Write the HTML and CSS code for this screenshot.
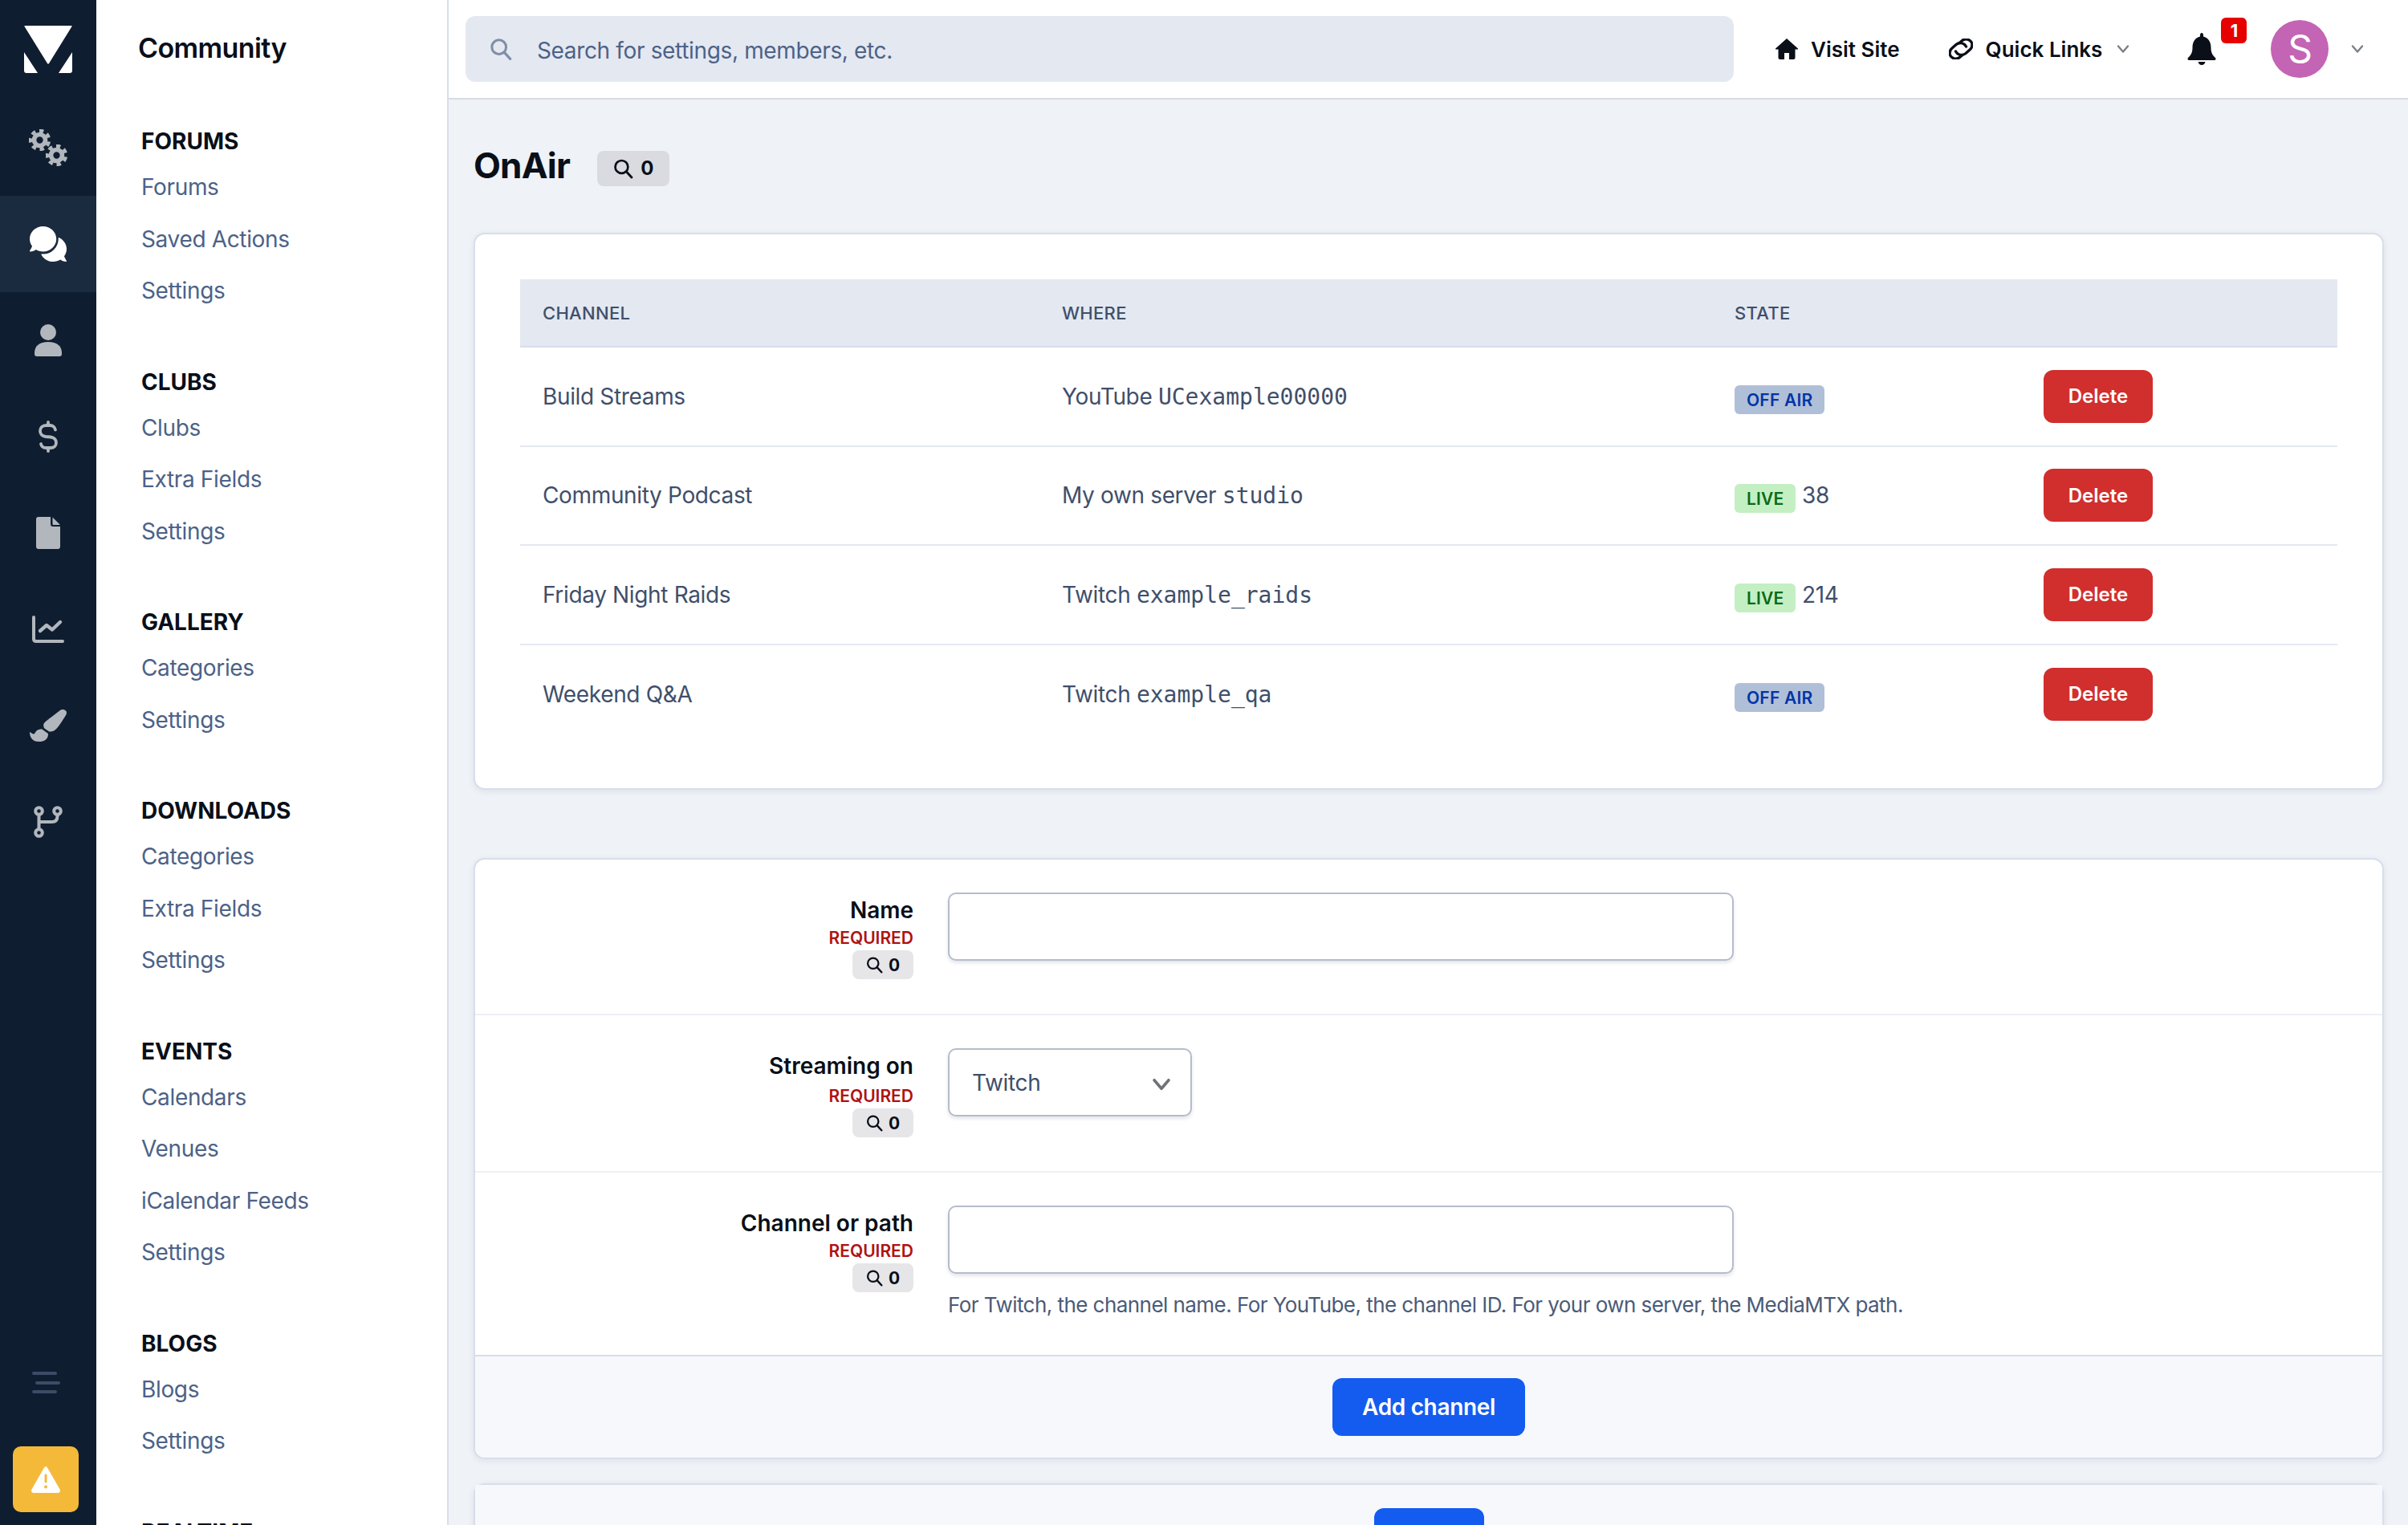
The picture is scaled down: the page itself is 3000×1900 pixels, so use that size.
FILE: index.html
```html
<!DOCTYPE html>
<html lang="en">
<head>
  <meta charset="UTF-8">
  <title>OnAir</title>
  <link rel="stylesheet" href="styles.css">
</head>
<body>
  <svg class="sprite" width="0" height="0">
    <symbol id="search" viewBox="0 0 24 24">
      <circle cx="10" cy="10" r="7.6" fill="none" stroke="currentColor" stroke-width="2.6"/>
      <path d="M15.6 15.6 22 22.6" fill="none" stroke="currentColor" stroke-width="2.8" stroke-linecap="round"/>
    </symbol>
    <symbol id="chevron" viewBox="0 0 16 12">
      <path d="M2 2.5 8 9.5 14 2.5" fill="none" stroke="currentColor" stroke-width="2.4" stroke-linecap="round" stroke-linejoin="round"/>
    </symbol>
    <symbol id="gear" viewBox="0 0 24 24">
      <circle cx="12" cy="12" r="10" fill="none" stroke="currentColor" stroke-width="4.4" stroke-dasharray="4.6 4.25" transform="rotate(12 12 12)"/>
      <circle cx="12" cy="12" r="6.2" fill="none" stroke="currentColor" stroke-width="5"/>
    </symbol>
  </svg>

  <nav class="rail">
    <a class="rail-logo" href="#">
      <svg width="60" height="59" viewBox="0 0 60 59"><path fill="#fff" d="M1 0h58q1 0 .5 1L31 47q-1 1.500-2 0L.5 1Q0 0 1 0ZM0 33l17 26H3q-3 0-3-3ZM60 33 43 59h14q3 0 3-3Z"/></svg>
    </a>
    <a class="rail-item" href="#">
      <svg width="48" height="46" viewBox="0 0 48 46">
        <use href="#gear" x="0" y="0" width="27" height="27"/>
        <use href="#gear" x="21" y="19" width="27" height="27"/>
      </svg>
    </a>
    <a class="rail-item rail-active" href="#">
      <svg width="46" height="44" viewBox="0 32 576 448" preserveAspectRatio="none"><path d="M416 192c0-88.400-93.100-160-208-160S0 103.600 0 192c0 34.300 14.100 65.900 38 92-13.400 30.200-35.500 54.200-35.800 54.500-2.200 2.300-2.800 5.700-1.500 8.700S4.800 352 8 352c36.600 0 66.900-12.300 88.700-25 32.200 15.700 70.300 25 111.300 25 114.900 0 208-71.600 208-160zm122 220c23.900-26 38-57.700 38-92 0-66.900-53.500-124.200-129.300-148.100.9 6.600 1.300 13.300 1.300 20.100 0 105.900-107.700 192-240 192-10.800 0-21.300-.8-31.700-1.900C207.800 439.600 281.800 480 368 480c41 0 79.100-9.200 111.300-25 21.800 12.700 52.100 25 88.700 25 3.200 0 6.100-1.900 7.300-4.800 1.300-2.900.7-6.300-1.500-8.700-.3-.3-22.400-24.200-35.800-54.500z"/></svg>
    </a>
    <a class="rail-item" href="#">
      <svg width="34" height="40" viewBox="0 0 34 40"><circle cx="17" cy="10" r="10"/><path d="M0 36c0-9 6-14 17-14s17 5 17 14v1q0 3-3 3H3q-3 0-3-3Z"/></svg>
    </a>
    <a class="rail-item" href="#">
      <svg width="24" height="40" viewBox="0 0 24 40"><path d="M12 2v4M12 34v4M21 11.500C20.500 8.500 18 6 14.500 6h-5C5 6 2 9 2 13s3 6.500 7 7l6 .5c4 .5 7 3 7 7s-3 6.500-7 6.500H9.500C6 34 3.500 32 3 29" fill="none" stroke="currentColor" stroke-width="3.800" stroke-linecap="round"/></svg>
    </a>
    <a class="rail-item" href="#">
      <svg width="30" height="40" viewBox="0 0 30 40"><path d="M3 0h15v9q0 3 3 3h9v25q0 3-3 3H3q-3 0-3-3V3q0-3 3-3Z"/><path d="M20.500 .5 29.500 9.500q.5.500-.5.500h-7.500q-1 0-1-1Z"/></svg>
    </a>
    <a class="rail-item" href="#">
      <svg width="40" height="34" viewBox="0 0 40 34"><path d="M2 2v27q0 3 3 3h33" fill="none" stroke="currentColor" stroke-width="4" stroke-linecap="round"/><path d="M10 19l8-7 7 5.500 10-9.500" fill="none" stroke="currentColor" stroke-width="4.400" stroke-linecap="round" stroke-linejoin="round"/></svg>
    </a>
    <a class="rail-item" href="#">
      <svg width="46" height="40" viewBox="0 0 512 512" preserveAspectRatio="none"><path d="M167 309c-40 3-76.500 18-97 72-2.400 6.200-8 10-14.600 10C44 391 10 363 0 357 0 440 38 512 128 512c76 0 128-44 128-120 0-3-.6-6-1-9l-88-74ZM458 0c-15 0-29 7-40 16C213 199 192 203 192 257c0 14 3 27 9 39l64 53c7 2 14 3 22 3 62 0 98-45 211-256 7-14 14-30 14-46C512 21 486 0 458 0Z"/></svg>
    </a>
    <a class="rail-item" href="#">
      <svg width="36" height="40" viewBox="0 0 36 40">
        <g fill="none" stroke="currentColor" stroke-width="4">
          <circle cx="6.500" cy="6.500" r="4.300"/><circle cx="6.500" cy="33.500" r="4.300"/><circle cx="29.500" cy="6.500" r="4.300"/>
          <path d="M6.500 11v18M29.500 11v2q0 7-7 7H7"/>
        </g>
      </svg>
    </a>
    <div class="rail-bottom">
      <a class="rail-toggle" href="#"><span></span><span class="toggle-long"></span><span></span></a>
      <a class="rail-warning" href="#">
        <svg width="36" height="33" viewBox="0 0 36 33"><path fill="#fff" d="M16 1.500q2-3 4 0l15.500 27q1.500 4-2 4.500H2.500q-3.500-.5-2-4.500Z"/><rect x="16.500" y="9.500" width="3" height="11" rx="1.500" fill="#f5b93a"/><circle cx="18" cy="25.500" r="2" fill="#f5b93a"/></svg>
      </a>
    </div>
  </nav>

  <aside class="subnav">
    <div class="subnav-title">Community</div>
    <section class="nav-group">
      <h3>Forums</h3>
      <a href="#">Forums</a><a href="#">Saved Actions</a><a href="#">Settings</a>
    </section>
    <section class="nav-group">
      <h3>Clubs</h3>
      <a href="#">Clubs</a><a href="#">Extra Fields</a><a href="#">Settings</a>
    </section>
    <section class="nav-group">
      <h3>Gallery</h3>
      <a href="#">Categories</a><a href="#">Settings</a>
    </section>
    <section class="nav-group">
      <h3>Downloads</h3>
      <a href="#">Categories</a><a href="#">Extra Fields</a><a href="#">Settings</a>
    </section>
    <section class="nav-group">
      <h3>Events</h3>
      <a href="#">Calendars</a><a href="#">Venues</a><a href="#">iCalendar Feeds</a><a href="#">Settings</a>
    </section>
    <section class="nav-group">
      <h3>Blogs</h3>
      <a href="#">Blogs</a><a href="#">Settings</a>
    </section>
    <section class="nav-group">
      <h3>Realtime</h3>
    </section>
  </aside>

  <div class="main">
    <header class="topbar">
      <div class="search">
        <svg class="search-icon"><use href="#search"/></svg>
        <span>Search for settings, members, etc.</span>
      </div>
      <a class="top-link link-visit" href="#">
        <svg width="28" height="26" viewBox="0 0 28 26"><path d="M14 0 28 12.500q.5 1-.5 1H24.500V24q0 2-2 2h-5.500v-8h-6v8H5.500q-2 0-2-2V13.500H.5q-1 0-.5-1Z"/></svg>
        Visit Site
      </a>
      <a class="top-link link-quick" href="#">
        <svg width="30" height="26" viewBox="0 0 30 26"><path d="M13 5.500 16 3q4-3.500 8.500-1.500T29 8q0 3.500-3 6l-5 4.500q-4 3-8 1.500-3-1-4.500-4M17 20.500 14 23q-4 3.500-8.500 1.500T1 18q0-3.500 3-6l5-4.500q4-3 8-1.500 3 1 4.500 4" fill="none" stroke="currentColor" stroke-width="3.400" stroke-linecap="round"/></svg>
        Quick Links
        <svg class="chev"><use href="#chevron"/></svg>
      </a>
      <a class="bell" href="#">
        <svg width="36" height="40" viewBox="0 0 36 40"><path d="M18 0q2 0 2 3v1.500C26 6 29.500 11 29.500 18c0 7 2 9.500 5.500 13q1.500 2.500-1 3H2q-2.500-.5-1-3c3.500-3.500 5.500-6 5.500-13 0-7 3.500-12 9.500-13.500V3q0-3 2-3ZM13.500 36h9q-1 4-4.500 4t-4.500-4Z"/></svg>
        <span class="bell-count">1</span>
      </a>
      <div class="avatar">S</div>
      <svg class="chev chev-user"><use href="#chevron"/></svg>
    </header>

    <main class="content">
      <div class="page-title">
        <h1>OnAir</h1>
        <span class="count-tag"><svg><use href="#search"/></svg>0</span>
      </div>

      <div class="card card-table">
        <table class="channels">
          <colgroup><col class="col-a"><col class="col-b"><col class="col-c"><col></colgroup>
          <thead>
            <tr><th>Channel</th><th>Where</th><th>State</th><th></th></tr>
          </thead>
          <tbody>
            <tr>
              <td>Build Streams</td>
              <td>YouTube <code>UCexample00000</code></td>
              <td><span class="state state-off">Off air</span></td>
              <td><button class="btn-delete">Delete</button></td>
            </tr>
            <tr>
              <td>Community Podcast</td>
              <td>My own server <code>studio</code></td>
              <td><span class="state state-live">Live</span> 38</td>
              <td><button class="btn-delete">Delete</button></td>
            </tr>
            <tr>
              <td>Friday Night Raids</td>
              <td>Twitch <code>example_raids</code></td>
              <td><span class="state state-live">Live</span> 214</td>
              <td><button class="btn-delete">Delete</button></td>
            </tr>
            <tr>
              <td>Weekend Q&amp;A</td>
              <td>Twitch <code>example_qa</code></td>
              <td><span class="state state-off">Off air</span></td>
              <td><button class="btn-delete">Delete</button></td>
            </tr>
          </tbody>
        </table>
      </div>

      <form class="card card-form">
        <div class="form-row">
          <div class="form-label">
            <label>Name</label>
            <span class="required">Required</span>
            <span class="count-tag count-small"><svg><use href="#search"/></svg>0</span>
          </div>
          <div><input class="field" type="text"></div>
        </div>
        <div class="form-row">
          <div class="form-label label-tall">
            <label>Streaming on</label>
            <span class="required">Required</span>
            <span class="count-tag count-small"><svg><use href="#search"/></svg>0</span>
          </div>
          <div class="select-wrap">
            <select class="field field-select"><option>Twitch</option></select>
            <svg class="select-chev"><use href="#chevron"/></svg>
          </div>
        </div>
        <div class="form-row">
          <div class="form-label">
            <label>Channel or path</label>
            <span class="required">Required</span>
            <span class="count-tag count-small"><svg><use href="#search"/></svg>0</span>
          </div>
          <div>
            <input class="field" type="text">
            <p class="help">For Twitch, the channel name. For YouTube, the channel ID. For your own server, the MediaMTX path.</p>
          </div>
        </div>
        <div class="form-footer"><button class="btn-primary" type="button">Add channel</button></div>
      </form>

      <div class="card card-next">
        <div class="form-footer"><button class="btn-primary btn-next" type="button"></button></div>
      </div>
    </main>
  </div>
</body>
</html>
```

FILE: styles.css
```css
* {
  box-sizing: border-box;
}
html, body {
  margin: 0;
  height: 100%;
  overflow: hidden;
}
body {
  display: flex;
  background: #eff2f7;
  color: #0a0f18;
  font-family: Inter, "Noto Sans", sans-serif;
  font-size: 28px;
  letter-spacing: -0.35px;
}
a {
  color: inherit;
  text-decoration: none;
}
.sprite {
  position: absolute;
}

/* icon rail */
.rail {
  width: 120px;
  flex: none;
  display: flex;
  flex-direction: column;
  background: #0f1d30;
  color: #b1b7bd;
}
.rail svg {
  fill: currentColor;
}
.rail-logo {
  height: 124px;
  flex: none;
  display: flex;
  justify-content: center;
  padding-top: 32px;
}
.rail-item {
  height: 120px;
  flex: none;
  display: flex;
  align-items: center;
  justify-content: center;
}
.rail-active {
  background: #1a2a3f;
  color: #fff;
}
.rail-bottom {
  margin-top: auto;
  padding: 0 22px 16px 16px;
}
.rail-toggle {
  display: flex;
  flex-direction: column;
  gap: 7.5px;
  width: 36px;
  margin: 0 0 66px 24px;
}
.rail-toggle span {
  display: block;
  width: 31px;
  height: 4px;
  border-radius: 2px;
  background: #3c4c66;
}
.rail-toggle .toggle-long {
  margin-left: 4px;
}
.rail-warning {
  display: flex;
  align-items: center;
  justify-content: center;
  width: 82px;
  height: 82px;
  border-radius: 10px;
  background: #f5b93a;
}

/* second column */
.subnav {
  width: 439px;
  flex: none;
  padding-left: 56px;
  background: #fff;
  border-right: 2px solid #d8deea;
  overflow: hidden;
}
.subnav-title {
  height: 120px;
  margin: 0 0 29px -4px;
  line-height: 120px;
  font-size: 34px;
  font-weight: 600;
  letter-spacing: -0.6px;
}
.nav-group {
  margin-bottom: 54px;
}
.nav-group h3 {
  margin: 0;
  height: 52px;
  line-height: 55px;
  font-size: 28px;
  font-weight: 700;
  letter-spacing: 0;
  text-transform: uppercase;
}
.nav-group a {
  display: block;
  height: 64.5px;
  line-height: 64.5px;
  color: #4c6287;
}

/* top bar */
.main {
  flex: 1;
  min-width: 0;
  display: flex;
  flex-direction: column;
}
.topbar {
  height: 124px;
  flex: none;
  display: flex;
  align-items: center;
  padding-left: 21px;
  background: #fff;
  border-bottom: 2px solid #d8dbe2;
}
.search {
  width: 1580px;
  height: 82px;
  display: flex;
  align-items: center;
  gap: 31px;
  padding-left: 30px;
  border-radius: 12px;
  background: #e4e8f1;
  color: #4c6287;
}
.search span {
  padding-top: 3px;
}
.search-icon {
  width: 28px;
  height: 30px;
  color: #7f8ea6;
}
.top-link {
  display: flex;
  align-items: center;
  font-size: 26px;
  font-weight: 600;
  letter-spacing: 0;
}
.top-link svg {
  fill: currentColor;
  margin-right: 16px;
}
.link-visit {
  margin-left: 52px;
}
.link-quick {
  margin-left: 61px;
}
.top-link .chev {
  margin: 0 0 0 18px;
}
.chev {
  width: 16px;
  height: 12px;
  color: #7c8086;
}
.chev-user {
  margin-left: 28px;
}
.bell {
  position: relative;
  margin-left: 72px;
  display: flex;
}
.bell svg {
  fill: currentColor;
}
.bell-count {
  position: absolute;
  left: 42px;
  top: -19px;
  width: 32px;
  height: 32px;
  border-radius: 6px;
  background: #e60000;
  color: #fff;
  font-size: 22px;
  font-weight: 700;
  line-height: 32px;
  text-align: center;
}
.avatar {
  width: 72px;
  height: 72px;
  margin-left: 68px;
  border-radius: 50%;
  background: #c464b4;
  color: #fff;
  font-size: 48px;
  line-height: 72px;
  text-align: center;
}

/* page */
.content {
  flex: 1;
  padding: 0 30px 0 31px;
}
.page-title {
  height: 166px;
  display: flex;
  align-items: center;
  gap: 34px;
  padding-bottom: 3px;
}
.page-title h1 {
  margin: 0;
  font-size: 44px;
  font-weight: 700;
  letter-spacing: -0.8px;
}
.count-tag {
  display: inline-flex;
  align-items: center;
  justify-content: center;
  gap: 9px;
  width: 90px;
  height: 44px;
  margin-top: 8px;
  border-radius: 8px;
  background: #d9dbe0;
  font-size: 24px;
  font-weight: 700;
}
.count-tag svg {
  width: 25px;
  height: 26px;
}
.card {
  background: #fff;
  border: 2px solid #d8deea;
  border-radius: 14px;
  box-shadow: 0 2px 8px rgba(20, 30, 50, 0.08);
}
.card-table {
  padding: 56px;
  margin-bottom: 85px;
}

/* channel table */
.channels {
  width: 100%;
  border-collapse: collapse;
  table-layout: fixed;
  color: #3f4f6b;
}
.col-a { width: 647px; }
.col-b { width: 838px; }
.col-c { width: 385px; }
.channels th {
  height: 84px;
  padding: 0 28px;
  background: #e4e8f1;
  border-bottom: 2px solid #d8deea;
  color: #3f4f6b;
  font-size: 22px;
  font-weight: 500;
  letter-spacing: 0.3px;
  text-align: left;
  text-transform: uppercase;
}
.channels td {
  height: 123.5px;
  padding: 0 28px;
  border-bottom: 2px solid #e4e8f1;
}
.channels tr:last-child td {
  border-bottom: 0;
}
code {
  font-family: "DejaVu Sans Mono", monospace;
  font-size: 28px;
  letter-spacing: 0;
}
.state {
  display: inline-block;
  height: 36px;
  margin: -10px 0;
  padding: 0 15px;
  border-radius: 6px;
  font-size: 21px;
  font-weight: 600;
  letter-spacing: 0.2px;
  line-height: 38px;
  text-transform: uppercase;
  vertical-align: -2px;
}
.state-off {
  background: #b0bfd8;
  color: #0035a6;
}
.state-live {
  background: #c3efc3;
  color: #0c6a14;
}
.btn-delete {
  width: 136px;
  height: 66px;
  border: 0;
  border-radius: 12px;
  background: #d12e2e;
  color: #fff;
  font: 600 24px Inter, sans-serif;
}

/* add form */
.form-row {
  display: grid;
  grid-template-columns: 546px 1fr;
  column-gap: 43px;
  padding: 41px 0;
  border-bottom: 2px solid #eef0f4;
}
.form-row:nth-child(3) {
  border-bottom: 0;
}
.form-label {
  display: flex;
  flex-direction: column;
  align-items: flex-end;
  padding: 2px 0;
  letter-spacing: 0;
}
.form-label label {
  height: 40px;
  line-height: 40px;
  font-weight: 600;
}
.label-tall {
  padding-bottom: 1px;
}
.label-tall label {
  height: 43px;
}
.required {
  height: 30px;
  line-height: 30px;
  color: #b01212;
  font-size: 21px;
  font-weight: 600;
  text-transform: uppercase;
}
.count-small {
  width: 76px;
  height: 36px;
  margin-top: 0;
  gap: 7px;
  background: #e6e6e8;
  font-size: 21px;
}
.count-small svg {
  width: 21px;
  height: 22px;
}
.field {
  display: block;
  width: 979px;
  height: 85px;
  padding: 0 28px;
  border: 2px solid #b5bccb;
  border-radius: 10px;
  background: #fff;
  box-shadow: 0 3px 4px rgba(40, 50, 70, 0.12);
  color: #3f4f6b;
  font: 28px Inter, sans-serif;
  letter-spacing: -0.35px;
}
.select-wrap {
  position: relative;
  width: 304px;
}
.field-select {
  width: 304px;
  appearance: none;
}
.select-chev {
  position: absolute;
  left: 254px;
  top: 36px;
  width: 24px;
  height: 18px;
  color: #6f7378;
}
.help {
  margin: 19px 0 1px;
  height: 40px;
  line-height: 40px;
  color: #4a5b78;
  font-size: 26px;
  letter-spacing: -0.55px;
}
.form-footer {
  display: flex;
  justify-content: center;
  padding: 27px;
  background: #f6f8fb;
  border-top: 2px solid #d8deea;
  border-radius: 0 0 12px 12px;
}
.btn-primary {
  width: 240px;
  height: 72px;
  border: 0;
  border-radius: 12px;
  background: #145cf0;
  color: #fff;
  font: 600 28px Inter, sans-serif;
  letter-spacing: -0.35px;
}
.card-next {
  margin-top: 30px;
  background: #f6f8fb;
}
.card-next .form-footer {
  border-top: 0;
  padding-top: 29px;
}
.btn-next {
  width: 137px;
}
```
